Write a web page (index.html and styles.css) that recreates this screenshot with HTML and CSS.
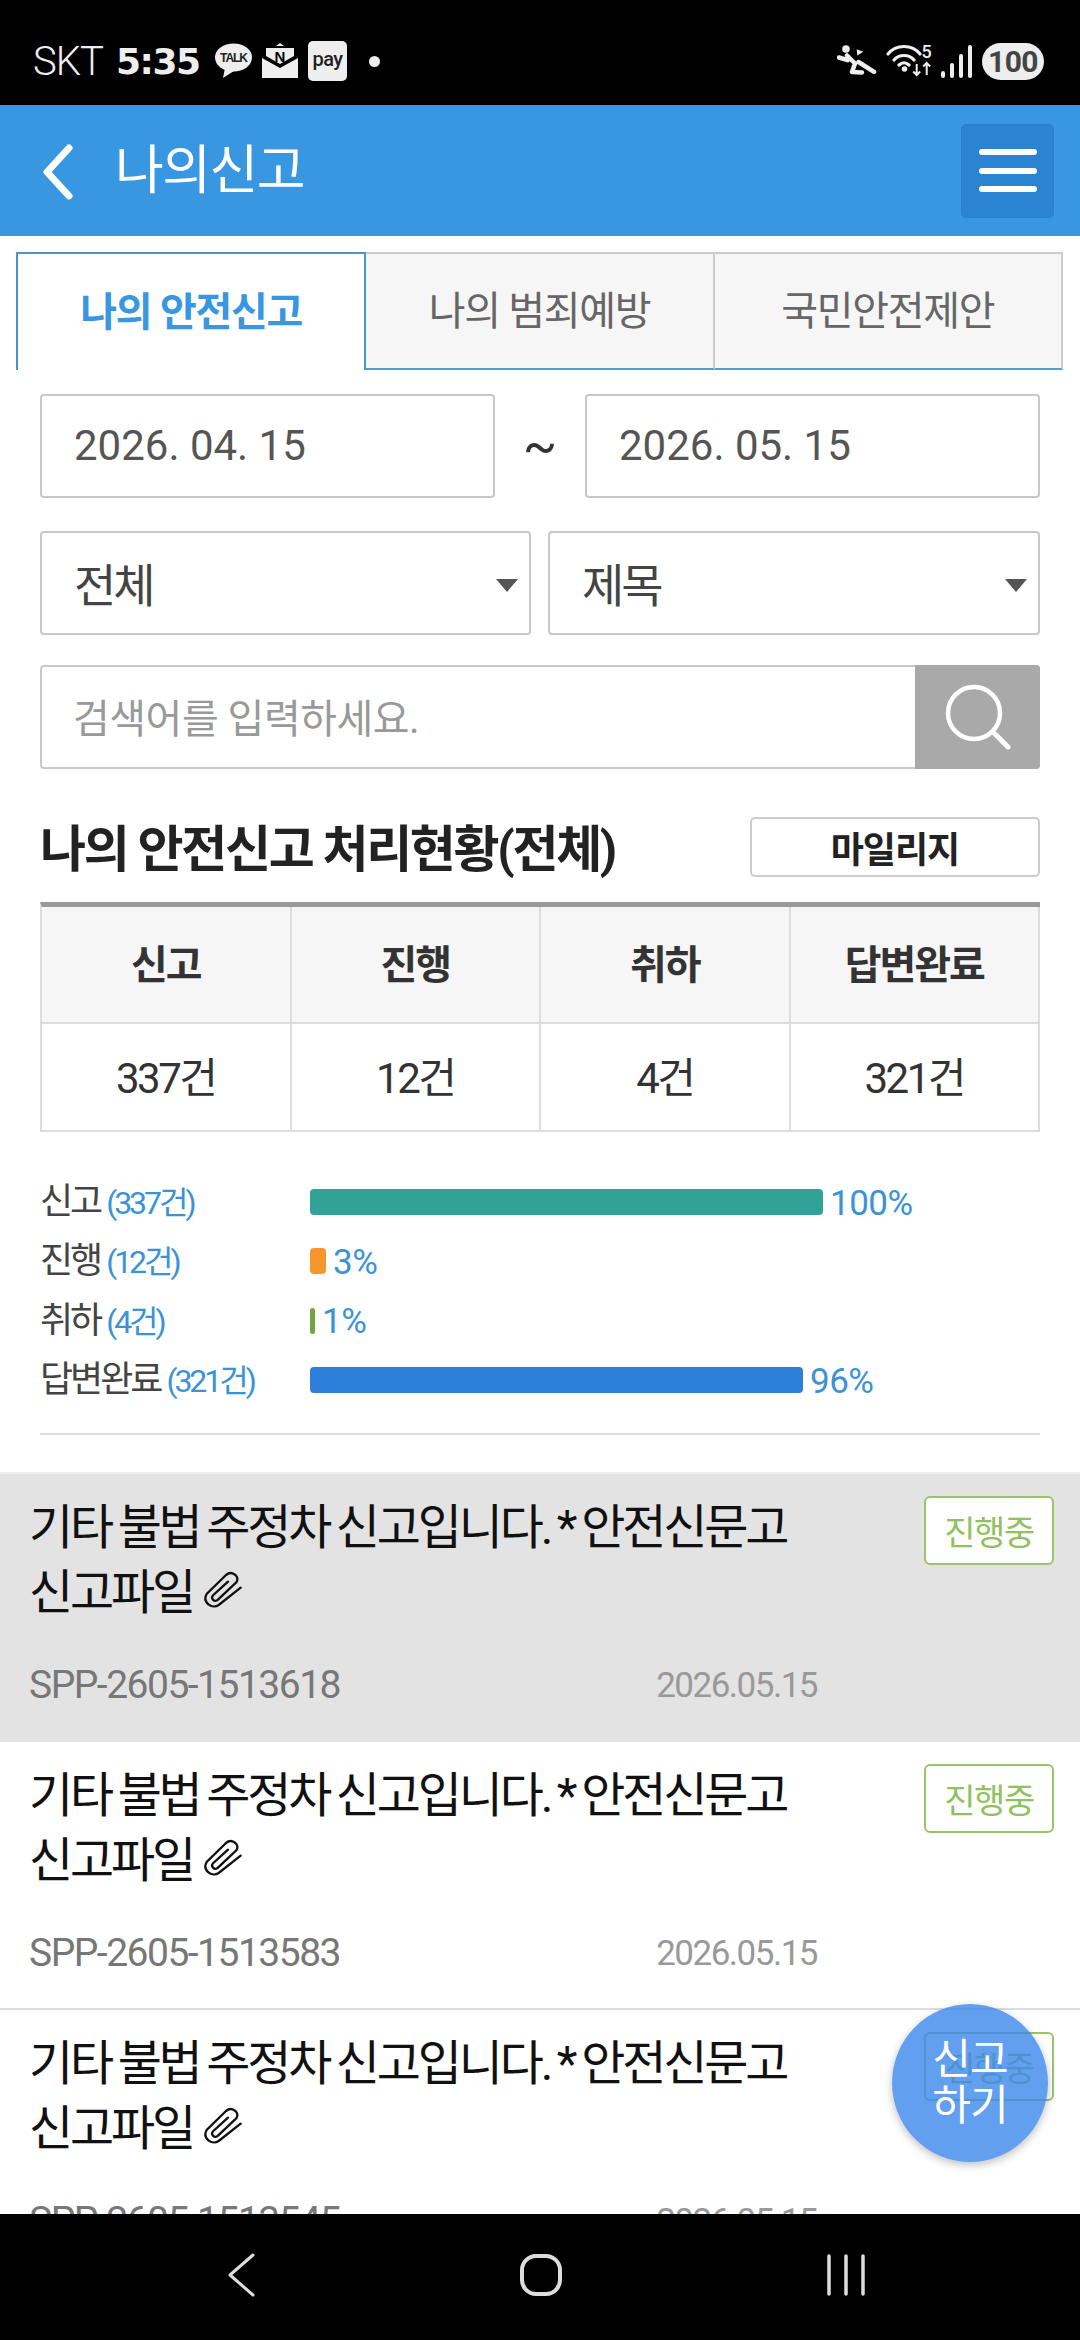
FILE: index.html
```html
<!DOCTYPE html>
<html lang="ko">
<head>
    <meta charset="UTF-8">
    <meta name="viewport" content="width=device-width, initial-scale=1.0">
    <title>나의신고</title>
    <link rel="stylesheet" href="styles.css">
</head>
<body>
<div class="phone">

    <div class="status-bar">
        <div class="status-left">
            <span class="carrier">SKT</span>
            <span class="clock">5:35</span>
            <svg class="talk" width="37" height="36" viewBox="0 0 37 36"><ellipse cx="18.500" cy="14.500" rx="18.500" ry="14" fill="#eee"/><path d="M10 25l-2 10 11-7z" fill="#eee"/><text x="18.500" y="19" text-anchor="middle" class="talk-text">TALK</text></svg>
            <svg class="mail" width="36" height="37" viewBox="0 0 36 37"><path d="M14 3l4-3 4 3z" fill="#eee"/><path d="M4 5h28v8L18 21 4 13z" fill="#eee"/><path d="M0 15l18 10 18-10v20H0z" fill="#eee"/><text x="18" y="18.500" text-anchor="middle" class="mail-text">N</text></svg>
            <span class="pay">pay</span>
            <span class="dot"></span>
        </div>
        <div class="status-right">
            <svg width="40" height="34" viewBox="0 0 40 34"><circle cx="9" cy="5" r="3.800" fill="#eee"/><path d="M19.700 5.200l6.600 2.600-6 3.700z" fill="#eee"/><path d="M2 13.500l8.500 2.700M10 11.500l8 8M18 19.500l-3 8.500 10 .5M21.500 18L37 27.800" fill="none" stroke="#eee" stroke-width="4.500" stroke-linecap="round" stroke-linejoin="round"/></svg>
            <svg width="46" height="34" viewBox="0 0 46 34"><path d="M2 10C10 0 26 0 34 10M8 16c5-6 15-6 20 0M13 21c3-3 7-3 10 0" fill="none" stroke="#eee" stroke-width="3.200" stroke-linecap="round"/><circle cx="18.500" cy="25" r="2.800" fill="#eee"/><path d="M30.700 20v11m-3.500-3.500l3.500 3.500 3.500-3.500M40.700 31V19m-3.500 3.500l3.500-3.500 3.500 3.500" fill="none" stroke="#eee" stroke-width="2"/><text x="40.700" y="14" text-anchor="middle" class="wifi-five">5</text></svg>
            <div class="signal">
                <span class="signal-1"></span><span class="signal-2"></span><span class="signal-3"></span><span class="signal-4"></span>
            </div>
            <span class="battery">100</span>
        </div>
    </div>

    <div class="header">
        <div class="header-left">
            <svg class="back" width="32" height="56" viewBox="0 0 32 56"><path d="M27 4L5 28l22 24" fill="none" stroke="#fff" stroke-width="7" stroke-linecap="round" stroke-linejoin="round"/></svg>
            <h1>나의신고</h1>
        </div>
        <div class="menu-btn"><span></span><span></span><span></span></div>
    </div>

    <div class="content">
        <div class="tabs">
            <div class="tab active">나의 안전신고</div>
            <div class="tab">나의 범죄예방</div>
            <div class="tab">국민안전제안</div>
        </div>

        <div class="filters">
            <div class="date-row">
                <div class="field date">2026. 04. 15</div>
                <span class="tilde">~</span>
                <div class="field date">2026. 05. 15</div>
            </div>
            <div class="select-row">
                <div class="field select wide">전체<i class="caret"></i></div>
                <div class="field select">제목<i class="caret"></i></div>
            </div>
            <div class="search">
                <div class="search-text">검색어를 입력하세요.</div>
                <div class="search-btn">
                    <svg width="66" height="66" viewBox="0 0 66 66"><circle cx="29" cy="29" r="26" fill="none" stroke="#fff" stroke-width="4.500"/><path d="M48 48l15 15" stroke="#fff" stroke-width="5" stroke-linecap="round"/></svg>
                </div>
            </div>
        </div>

        <div class="stat-title">
            <h2>나의 안전신고 처리현황(전체)</h2>
            <div class="mileage">마일리지</div>
        </div>

        <div class="stat-table">
            <div class="th">신고</div>
            <div class="th">진행</div>
            <div class="th">취하</div>
            <div class="th">답변완료</div>
            <div class="td">337건</div>
            <div class="td">12건</div>
            <div class="td">4건</div>
            <div class="td">321건</div>
        </div>

        <div class="chart">
            <div class="chart-row">
                <div class="chart-label">신고 <em>(337건)</em></div>
                <div class="bar teal" style="width:513px"></div>
                <span class="pct">100%</span>
            </div>
            <div class="chart-row">
                <div class="chart-label">진행 <em>(12건)</em></div>
                <div class="bar orange" style="width:16px"></div>
                <span class="pct">3%</span>
            </div>
            <div class="chart-row">
                <div class="chart-label">취하 <em>(4건)</em></div>
                <div class="bar green" style="width:5px"></div>
                <span class="pct">1%</span>
            </div>
            <div class="chart-row">
                <div class="chart-label">답변완료 <em>(321건)</em></div>
                <div class="bar blue" style="width:493px"></div>
                <span class="pct">96%</span>
            </div>
        </div>

        <div class="report-list">
            <div class="report selected">
                <div class="report-main">
                    <div class="report-title">기타 불법 주정차 신고입니다. <span class="star">*</span>안전신문고<br>신고파일 <svg class="clip" width="38" height="38" viewBox="36 26 114 114"><path d="M146 76L80 128C60 142 30 120 44 95L102 38C118 24 145 40 133 60L78 112C68 122 54 108 64 98L108 58" fill="none" stroke="#111" stroke-width="7" stroke-linecap="round"/></svg></div>
                    <div class="report-meta"><span class="report-no">SPP-2605-1513618</span><span class="report-date">2026.05.15</span></div>
                </div>
                <span class="badge">진행중</span>
            </div>
            <div class="report">
                <div class="report-main">
                    <div class="report-title">기타 불법 주정차 신고입니다. <span class="star">*</span>안전신문고<br>신고파일 <svg class="clip" width="38" height="38" viewBox="36 26 114 114"><path d="M146 76L80 128C60 142 30 120 44 95L102 38C118 24 145 40 133 60L78 112C68 122 54 108 64 98L108 58" fill="none" stroke="#111" stroke-width="7" stroke-linecap="round"/></svg></div>
                    <div class="report-meta"><span class="report-no">SPP-2605-1513583</span><span class="report-date">2026.05.15</span></div>
                </div>
                <span class="badge">진행중</span>
            </div>
            <div class="report">
                <div class="report-main">
                    <div class="report-title">기타 불법 주정차 신고입니다. <span class="star">*</span>안전신문고<br>신고파일 <svg class="clip" width="38" height="38" viewBox="36 26 114 114"><path d="M146 76L80 128C60 142 30 120 44 95L102 38C118 24 145 40 133 60L78 112C68 122 54 108 64 98L108 58" fill="none" stroke="#111" stroke-width="7" stroke-linecap="round"/></svg></div>
                    <div class="report-meta"><span class="report-no">SPP-2605-1513545</span><span class="report-date">2026.05.15</span></div>
                </div>
                <span class="badge">진행중</span>
            </div>
        </div>

        <div class="fab">신고<br>하기</div>
    </div>

    <div class="nav-bar">
        <svg width="30" height="44" viewBox="0 0 30 44"><path d="M27 2L4 22l23 20" fill="none" stroke="#ddd" stroke-width="3" stroke-linecap="round" stroke-linejoin="round"/></svg>
        <svg width="44" height="44" viewBox="0 0 44 44"><rect x="3" y="3" width="38" height="38" rx="14" fill="none" stroke="#ddd" stroke-width="4"/></svg>
        <svg width="40" height="42" viewBox="0 0 40 42"><path d="M3 2v38M20 2v38M37 2v38" stroke="#ddd" stroke-width="3.500" stroke-linecap="round"/></svg>
    </div>
</div>
</body>
</html>
```

FILE: styles.css
```css
* { box-sizing: border-box; }
html, body { margin: 0; padding: 0; }
body { background: #fff; font-family: Roboto, "Noto Sans CJK KR", sans-serif; }
h1, h2 { margin: 0; }
em { font-style: normal; }

.phone { width: 1080px; height: 2340px; display: flex; flex-direction: column; overflow: hidden; }

/* status bar */
.status-bar { height: 105px; background: #000; color: #eee; display: flex; justify-content: space-between; align-items: center; padding: 17px 36px 0 33px; flex-shrink: 0; }
.status-left, .status-right { display: flex; align-items: center; }
.carrier { font-size: 40px; font-weight: 300; width: 83px; letter-spacing: -1px; }
.clock { font-family: "DejaVu Sans", sans-serif; font-size: 36px; font-weight: 700; width: 99px; letter-spacing: -1.5px; }
.talk { margin-right: 10px; }
.talk-text { font: 700 12px "Liberation Sans", sans-serif; fill: #222; letter-spacing: -1px; }
.mail { margin-right: 10px; }
.mail-text { font: 700 15px "Liberation Sans", sans-serif; fill: #000; }
.pay { width: 39px; height: 40px; background: #eee; color: #222; border-radius: 5px; font-size: 20px; font-weight: 500; letter-spacing: -0.5px; display: flex; align-items: center; justify-content: center; padding-bottom: 4px; }
.dot { width: 11px; height: 11px; border-radius: 50%; background: #eee; margin-left: 22px; }
.status-right { gap: 9px; }
.wifi-five { font: 500 18px Roboto, sans-serif; fill: #eee; }
.signal { display: flex; align-items: flex-end; gap: 5px; height: 34px; margin-right: 1px; }
.signal span { display: block; width: 4px; background: #eee; border-radius: 2px; }
.signal-1 { height: 7px; }
.signal-2 { height: 15px; }
.signal-3 { height: 24px; }
.signal-4 { height: 33px; }
.battery { width: 62px; height: 37px; border-radius: 19px; background: #eee; color: #444; font-size: 30px; font-weight: 700; display: flex; align-items: center; justify-content: center; letter-spacing: -0.5px; }

/* header */
.header { height: 131px; background: #3996e0; display: flex; justify-content: space-between; align-items: center; padding: 0 26px 0 42px; flex-shrink: 0; }
.header-left { display: flex; align-items: center; gap: 41px; }
.back { margin-top: 3px; }
h1 { color: #fff; font-size: 53px; font-weight: 400; letter-spacing: -1.5px; line-height: 60px; }
.menu-btn { width: 93px; height: 94px; background: #2a84d2; border: 1px solid #2a7fc8; border-radius: 5px; display: flex; flex-direction: column; align-items: center; justify-content: center; gap: 12.5px; }
.menu-btn span { width: 58px; height: 6px; background: #fff; border-radius: 3px; }

.content { flex: 1; min-height: 0; position: relative; overflow: hidden; }

/* tabs */
.tabs { display: flex; margin: 16px 17px 0 16px; height: 118px; }
.tab { flex: 1; display: flex; align-items: center; justify-content: center; font-size: 40px; color: #666; background: #f6f6f6; letter-spacing: -1.3px; border-top: 2px solid #ccc; border-right: 2px solid #ccc; border-bottom: 2px solid #4f9fcf; padding-bottom: 6px; }
.tab.active { background: #fff; color: #3996e0; font-weight: 700; border: 2px solid #4a94cc; border-bottom: none; }

/* filters */
.filters { padding: 24px 40px 0; display: flex; flex-direction: column; }
.date-row { display: flex; justify-content: space-between; align-items: center; }
.field { height: 104px; background: #fff; border: 2px solid #c8c8c8; border-radius: 4px; display: flex; align-items: center; color: #555; padding: 0 0 2px 32px; }
.date { width: 455px; font-size: 42px; }
.tilde { font-size: 50px; color: #333; }
.select-row { display: flex; gap: 17px; margin-top: 33px; }
.select { flex: 1; position: relative; font-size: 46px; color: #444; letter-spacing: -3px; }
.select.wide { flex: none; width: 491px; }
.caret { position: absolute; right: 11px; top: 46px; width: 0; height: 0; border-left: 11px solid transparent; border-right: 11px solid transparent; border-top: 13px solid #555; }
.search { display: flex; height: 104px; margin-top: 30px; border: 2px solid #c8c8c8; border-radius: 4px; position: relative; }
.search-text { flex: 1; display: flex; align-items: center; padding: 0 0 2px 31px; font-size: 40px; color: #999; letter-spacing: -0.5px; }
.search-btn { width: 125px; margin: -2px; background: #a9a9a9; border-radius: 0 4px 4px 0; display: flex; align-items: center; justify-content: center; }

/* stats */
.stat-title { display: flex; justify-content: space-between; align-items: center; margin: 48px 40px 0; height: 60px; }
h2 { font-size: 50px; font-weight: 700; color: #222; letter-spacing: -2.3px; padding-bottom: 4px; }
.mileage { width: 290px; height: 60px; border: 2px solid #ccc; border-radius: 5px; display: flex; align-items: center; justify-content: center; font-size: 36px; font-weight: 700; color: #222; letter-spacing: -1px; }
.stat-table { display: grid; grid-template-columns: repeat(4, 1fr); grid-template-rows: 117px 108px; margin: 25px 40px 0; border-top: 5px solid #999; border-left: 2px solid #ddd; }
.th, .td { display: flex; align-items: center; justify-content: center; border-right: 2px solid #ddd; border-bottom: 2px solid #ddd; color: #333; padding-bottom: 6px; }
.th { background: #f6f6f6; font-size: 40px; font-weight: 700; letter-spacing: -2px; }
.td { font-size: 42px; letter-spacing: -2.5px; }

.chart { margin: 50px 40px 0; padding-bottom: 33px; border-bottom: 2px solid #ddd; display: flex; flex-direction: column; gap: 19.4px; }
.chart-row { display: flex; align-items: center; height: 40px; }
.chart-label { width: 270px; font-size: 36px; color: #444; letter-spacing: -3px; white-space: nowrap; padding-bottom: 8px; }
.chart-label em { color: #3b93d6; font-size: 32px; letter-spacing: -3px; }
.bar { height: 26px; border-radius: 4px; }
.teal { background: #30a298; }
.orange { background: #f7962e; }
.green { background: #6fa53c; }
.blue { background: #2e7fd9; }
.pct { margin-left: 7px; font-size: 35px; color: #3b93d6; letter-spacing: -0.5px; padding-top: 2px; }

/* list */
.report-list { margin-top: 37px; border-top: 2px solid #eee; }
.report { height: 268px; display: flex; justify-content: space-between; padding: 21px 26px 0 29px; border-bottom: 2px solid #ddd; }
.report.selected { background: #e3e3e3; border-bottom-color: #e3e3e3; }
.report-main { width: 788px; }
.report-title { font-size: 48px; line-height: 65px; color: #111; letter-spacing: -3.2px; word-spacing: -2px; }
.star { margin-right: 7px; }
.clip { vertical-align: 0; margin-left: 4px; }
.report-meta { display: flex; justify-content: space-between; align-items: center; margin-top: 40px; height: 40px; }
.report-no { font-size: 39px; color: #777; letter-spacing: -1.5px; }
.report-date { font-size: 35px; color: #999; letter-spacing: -1.5px; }
.badge { width: 130px; height: 69px; margin-top: 1px; background: #fff; border: 2px solid #9ac46c; border-radius: 6px; display: flex; align-items: center; justify-content: center; color: #8fc15d; font-size: 34px; letter-spacing: -1.5px; flex-shrink: 0; }

.fab { position: absolute; left: 892px; top: 1768px; width: 156px; height: 158px; border-radius: 50%; background: rgba(60, 135, 235, 0.8); box-shadow: 0 3px 8px rgba(0, 0, 0, 0.25); color: #fff; font-size: 42px; line-height: 46px; letter-spacing: -1px; display: flex; align-items: center; justify-content: center; text-align: center; }

.nav-bar { height: 126px; background: #000; display: flex; flex-shrink: 0; justify-content: space-between; align-items: center; padding: 0 214px 4px 226px; }
```
